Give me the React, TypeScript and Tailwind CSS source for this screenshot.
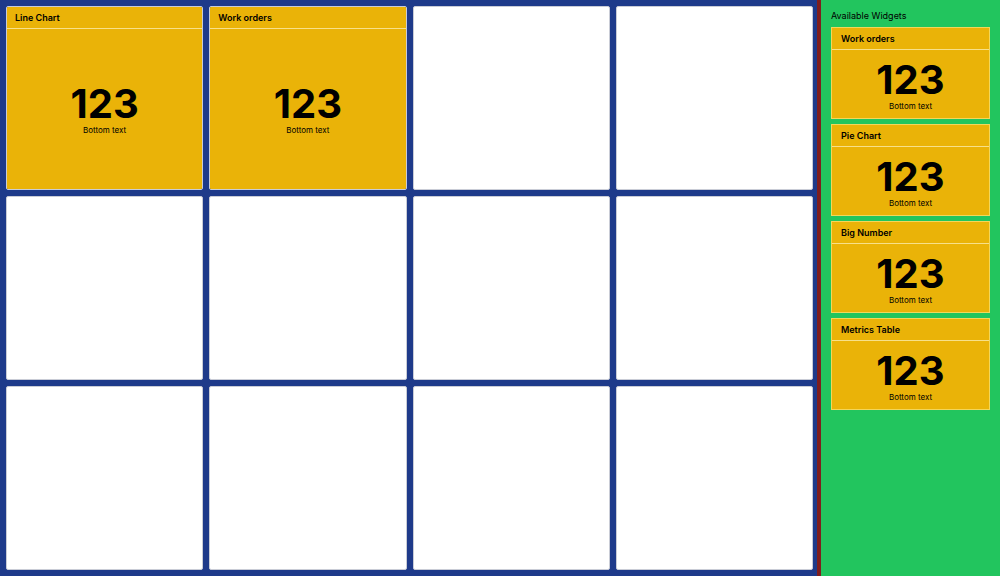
import React from 'react';

type Widget = { title: string } | null;

const GRID: Widget[] = [
  { title: 'Line Chart' },
  { title: 'Work orders' },
  null, null,
  null, null, null, null,
  null, null, null, null,
];

const AVAILABLE = ['Work orders', 'Pie Chart', 'Big Number', 'Metrics Table'];

function BigNumber({ compact }: { compact?: boolean }) {
  return (
    <div className={`flex flex-1 flex-col items-center justify-center ${compact ? 'pt-[3px]' : ''}`}>
      <div className="text-[40px] font-bold leading-none text-black">123</div>
      <div className="mt-[1px] text-[8px] leading-[10px] text-black">Bottom text</div>
    </div>
  );
}

function WidgetCard({ title, compact }: { title: string; compact?: boolean }) {
  return (
    <div className={`flex flex-col bg-[#eab308] ${compact ? 'h-[92px] border border-[#f3d65a]' : 'h-full'}`}>
      <div
        className={`flex items-center border-b border-[#f7e08a] text-[9px] font-semibold text-black ${
          compact ? 'h-[22px] px-[9px]' : 'h-[22px] px-2'
        }`}
      >
        {title}
      </div>
      <BigNumber compact={compact} />
    </div>
  );
}

export default function App() {
  return (
    <div
      className="flex h-[576px] w-[1000px] overflow-hidden"
      style={{ fontFamily: 'Inter, "Noto Sans", sans-serif' }}
    >
      {/* Dashboard grid */}
      <div className="grid h-full w-[817px] shrink-0 grid-cols-4 grid-rows-3 gap-[6px] bg-[#1e3a8a] py-[6px] pl-[6px] pr-[4px]">
        {GRID.map((w, i) => (
          <div key={i} className="overflow-hidden rounded-[2px] border border-[#c9ccd6] bg-white">
            {w && <WidgetCard title={w.title} />}
          </div>
        ))}
      </div>

      {/* Sidebar */}
      <aside className="flex h-full flex-1 flex-col border-l-4 border-[#7f1d1d] bg-[#22c55e] px-[10px] pt-[10px]">
        <div className="text-[9px] leading-[12px] text-black">Available Widgets</div>
        <div className="mt-[5px] flex flex-col gap-[5px]">
          {AVAILABLE.map((t) => (
            <WidgetCard key={t} title={t} compact />
          ))}
        </div>
      </aside>
    </div>
  );
}
